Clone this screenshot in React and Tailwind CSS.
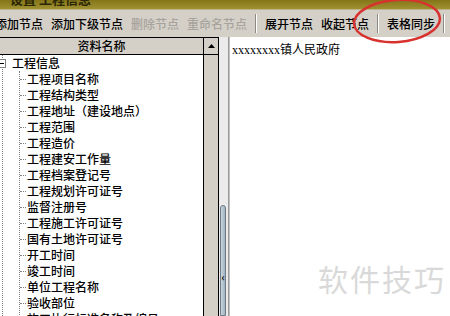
import React from 'react';

const tools = [
    { label: '添加节点' },
    { label: '添加下级节点' },
    { label: '删除节点', disabled: true },
    { label: '重命名节点', disabled: true },
    { sep: true },
    { label: '展开节点' },
    { label: '收起节点' },
    { sep: true },
    { label: '表格同步' },
    { sep: true },
    { label: '导' },
];

const children = [
    '工程项目名称',
    '工程结构类型',
    '工程地址（建设地点）',
    '工程范围',
    '工程造价',
    '工程建安工作量',
    '工程档案登记号',
    '工程规划许可证号',
    '监督注册号',
    '工程施工许可证号',
    '国有土地许可证号',
    '开工时间',
    '竣工时间',
    '单位工程名称',
    '验收部位',
    '施工执行标准名称及编号',
];

export default function App() {
    return (
        <div className="relative w-[450px] h-[316px] overflow-hidden bg-[#d4d0c8] text-[12px] font-medium text-black font-['Noto_Sans_CJK_SC',sans-serif]">
            {/* title bar, mostly cut off */}
            <div className="h-[10px] overflow-hidden bg-gradient-to-b from-[#847518] to-[#a09131] border-b border-[#bdb38a]">
                <div className="mt-[-9px] ml-[10px] text-[13px] font-bold leading-[16px] text-[#2b2604]">设置 工程信息</div>
            </div>

            {/* toolbar */}
            <div className="h-[27px] flex items-center gap-2 ml-[-5px] whitespace-nowrap">
                {tools.map((t, i) =>
                    t.sep ? (
                        <div key={i} className="w-[2px] h-[19px] border-l border-[#8c8a84] border-r border-r-white" />
                    ) : (
                        <span key={i} className={t.disabled ? 'text-[#a6a39c]' : 'text-black'}>{t.label}</span>
                    )
                )}
            </div>

            {/* body */}
            <div className="flex h-[279px]">
                {/* tree panel */}
                <div className="flex w-[219px] border-t border-black">
                    <div className="w-[203px] flex flex-col">
                        <div className="h-[17px] border-b border-black flex items-center justify-center leading-none">资料名称</div>
                        <div className="flex-1 bg-white overflow-hidden">
                            <div className="ml-[2px] h-full border-l border-dotted border-[#7f7f7f]">
                                <div className="flex items-center h-4 ml-[-6px]">
                                    <div className="w-[9px] h-[9px] border border-[#808080] bg-white flex items-center justify-center">
                                        <div className="w-[5px] h-px bg-black" />
                                    </div>
                                    <span className="ml-[6px] leading-none">工程信息</span>
                                </div>
                                <div className="ml-[16px] border-l border-dotted border-[#7f7f7f]">
                                    {children.map((c) => (
                                        <div key={c} className="flex items-center h-4 whitespace-nowrap">
                                            <span className="w-[6px] border-t border-dotted border-[#7f7f7f]" />
                                            <span className="ml-[1px] leading-none">{c}</span>
                                        </div>
                                    ))}
                                </div>
                            </div>
                        </div>
                    </div>
                    {/* vertical scrollbar */}
                    <div className="w-[16px] border-l border-r border-black flex flex-col bg-[#d4d0c8]">
                        <div className="h-[17px] border-b border-black flex items-center justify-center">
                            <svg width="7" height="4" viewBox="0 0 7 4"><path d="M3.5 0L7 4H0z" fill="#000" /></svg>
                        </div>
                        <div className="flex-1 bg-[#d4d0c8]" />
                    </div>
                </div>

                {/* splitter */}
                <div className="w-[10px] flex flex-col bg-[#ebebeb] border-r border-[#9a9a9a]">
                    <div className="h-[168px]" />
                    <div className="flex-1 mx-[1px] w-[6px] rounded-t-[3px] border border-[#6f7c86] bg-gradient-to-r from-[#c9d6df] to-[#9fb2c0] flex flex-col items-center">
                        <span className="mt-[66px] text-[10px] leading-none font-bold text-black">‹</span>
                    </div>
                </div>

                {/* right content */}
                <div className="relative flex-1 bg-white border-l border-[#c0c0c0]">
                    <div className="mt-[5px] ml-[2px] leading-[14px] font-normal font-['Liberation_Serif','Noto_Sans_CJK_SC',serif]">
                        xxxxxxxx<span className="font-['Noto_Sans_CJK_SC',sans-serif]">镇人民政府</span>
                    </div>
                    <div className="absolute left-[88px] top-[226px] text-[30px] font-normal leading-none tracking-[2px] text-[#d9d9d9] whitespace-nowrap">软件技巧</div>
                </div>
            </div>

            {/* red annotation ellipse */}
            <svg className="absolute left-[350px] top-[-4px]" width="100" height="52" viewBox="0 0 100 52">
                <ellipse cx="47" cy="25" rx="43" ry="21" fill="none" stroke="#d8322f" strokeWidth="2.5" transform="rotate(-4 47 25)" />
            </svg>
        </div>
    );
}
